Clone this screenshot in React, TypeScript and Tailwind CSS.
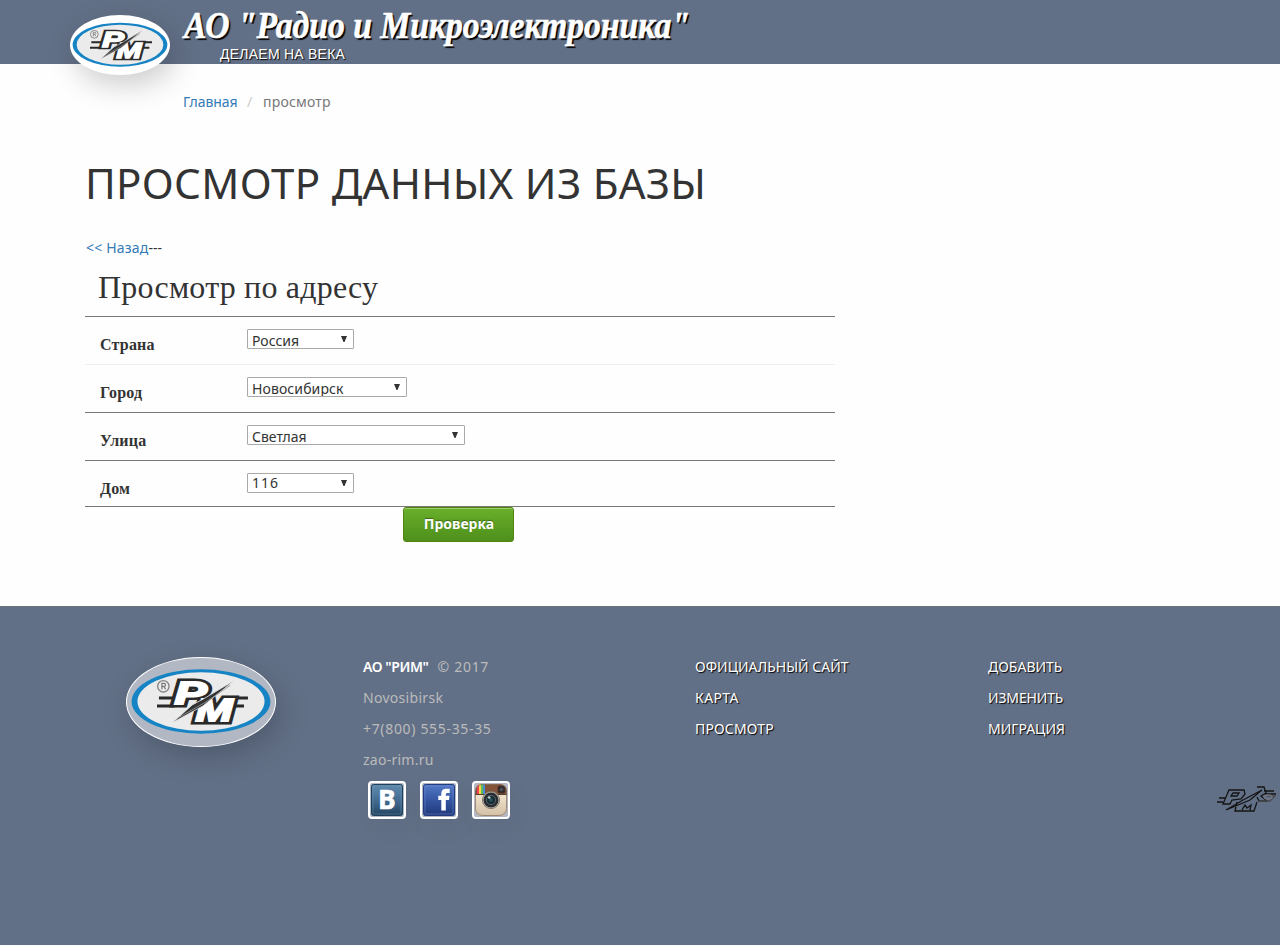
type Field = { label: string; value: string; width: string; line: string; text: string };

const fields: Field[] = [
  { label: "Страна", value: "Россия", width: "w-[107px]", line: "border-[#777]", text: "pt-[2px]" },
  { label: "Город", value: "Новосибирск", width: "w-[160px]", line: "border-[#eee]", text: "pt-[2px] tracking-[0.1px]" },
  { label: "Улица", value: "Светлая", width: "w-[218px]", line: "border-[#777]", text: "pt-[2px]" },
  { label: "Дом", value: "116", width: "w-[107px]", line: "border-[#777]", text: "tracking-[1px]" },
];

const shadow = "[text-shadow:1px_1px_1px_#000]";

function LogoLetters({ color, stroke }: { color: string; stroke: number }) {
  return (
    <g
      fontFamily="Liberation Sans"
      fontWeight="bold"
      fontStyle="italic"
      fontSize="32"
      fill={color}
      stroke={color}
      strokeWidth={stroke}
    >
      <text x="48" y="47.500" textLength="33" lengthAdjust="spacingAndGlyphs">P</text>
      <text x="69.500" y="64" textLength="38" lengthAdjust="spacingAndGlyphs">M</text>
    </g>
  );
}

function Logo({ className }: { className: string }) {
  return (
    <svg viewBox="0 0 150 90" className={className} aria-hidden="true">
      <ellipse cx="75" cy="44.5" rx="67.5" ry="31" fill="#ebebeb" />
      <path
        fillRule="evenodd"
        fill="#1684c4"
        d="M4 44.5A71 33 0 0 1 146 44.5A71 33 0 0 1 4 44.5ZM10 44.5A65 30 0 0 0 140 44.5A65 30 0 0 0 10 44.5Z"
      />
      <path d="M32 41H50M30 49H48M104 41H123M102 49H119" stroke="#292929" strokeWidth="3" />
      <LogoLetters color="#292929" stroke={7} />
      <LogoLetters color="#fff" stroke={2} />
      <path d="M109 23 87 41 77 49 46 66 66 48 79 41Z" fill="#333" stroke="#ebebeb" strokeWidth=".8" />
      <path d="M105 28 80 45 52 61" fill="none" stroke="#999" strokeWidth=".9" />
      <circle cx="36.5" cy="29" r="5.8" fill="none" stroke="#858585" strokeWidth="1.4" />
      <path d="M35 32v-6h2.2a1.5 1.5 0 0 1 0 3H35m2 0 1.8 3" fill="none" stroke="#777" strokeWidth="1.2" />
    </svg>
  );
}

function Header() {
  return (
    <header className="relative h-16 bg-[#627087] pl-[184px] text-white">
      <div className="absolute left-[70px] top-[15px] h-[60px] w-[100px] rounded-[50%] bg-white shadow-[5px_10px_30px_rgba(0,0,0,0.2)]">
        <Logo className="size-full" />
      </div>
      <div className="h-[46px] origin-left scale-x-[0.885] whitespace-nowrap pt-1 font-['Liberation_Serif',serif] text-[38px] font-bold italic leading-[42px] [-webkit-text-stroke:0.6px_#fff] [text-shadow:2px_2px_1px_#000]">
        АО "Радио и Микроэлектроника"
      </div>
      <div className={"pl-9 font-['Liberation_Sans',sans-serif] text-sm leading-4 tracking-[0.24px] " + shadow}>
        ДЕЛАЕМ НА ВЕКА
      </div>
    </header>
  );
}

function Main() {
  return (
    <main className="h-[542px] pl-[85px] text-sm text-[#333]">
      <nav className="flex h-[76px] pl-[98px] pt-[28px] leading-5 text-[#777]">
        <a className="w-[64px] tracking-[-0.1px] text-[#337ab7]">Главная</a>
        <span className="w-[16px] text-[#ccc]">/</span>
        <span className="tracking-[0.2px]">просмотр</span>
      </nav>
      <h1 className="h-[97px] pt-[19px] text-[42px] leading-[48px] tracking-[0.3px]">ПРОСМОТР ДАННЫХ ИЗ БАЗЫ</h1>
      <p className="h-[32px] pl-px pt-px leading-5">
        <a className="tracking-[0.2px] text-[#337ab7]">&lt;&lt; Назад</a>---
      </p>
      <h2 className="h-[47px] pl-[13px] font-['Liberation_Serif',serif] text-[32px] leading-[36px] tracking-[0.2px]">
        Просмотр по адресу
      </h2>
      <div className="flex w-[750px] flex-col border-b border-[#777]">
        {fields.map((f) => (
          <div key={f.label} className={"flex h-12 items-start border-t pl-[15px] last:h-[46px] " + f.line}>
            <span className="w-[147px] pt-[18px] font-['Liberation_Serif',serif] text-base font-bold leading-5 tracking-[0.2px]">
              {f.label}
            </span>
            <div className={"mt-3 flex h-5 justify-between overflow-hidden rounded-[1px] border border-[#a9a9a9] bg-white pl-1 pr-[5px] " + f.width}>
              <span className={"leading-[18px] " + f.text}>{f.value}</span>
              <svg viewBox="0 0 8 8" className="mt-[5px] size-2" aria-hidden="true">
                <path d="M1 1h6L4.5 7h-1z" fill="#333" />
              </svg>
            </div>
          </div>
        ))}
      </div>
      <button className="ml-[318px] block h-[35px] w-[111px] rounded-[3px] border border-[#538312] bg-linear-to-b from-[#6aaf2b] to-[#4e901b] pb-0.5 pl-px text-sm font-bold leading-[31px] text-white shadow-[inset_0_1px_0_#9bd168] [text-shadow:0_-1px_1px_#396715]">
        Проверка
      </button>
    </main>
  );
}

const tile = "size-[38px] rounded-[4px] border-2 border-white bg-[#b1b8c4] p-px shadow-[5px_10px_25px_rgba(0,0,0,0.04)]";

function Social() {
  return (
    <div className="flex gap-[14px] pl-[5px] pt-[6px]">
      <svg viewBox="0 0 32 32" className={tile} aria-label="VK">
        <defs>
          <linearGradient id="vk" x2="0" y2="1"><stop stopColor="#5f8bae" /><stop offset=".55" stopColor="#41698e" /><stop offset="1" stopColor="#23445f" /></linearGradient>
          <linearGradient id="fb" x2="0" y2="1"><stop stopColor="#5179c6" /><stop offset=".6" stopColor="#304f9b" /><stop offset="1" stopColor="#203878" /></linearGradient>
        </defs>
        <rect x=".5" y=".5" width="31" height="31" rx="2" fill="url(#vk)" stroke="#1d405d" />
        <rect x="2" y="2" width="28" height="28" rx="1" fill="none" stroke="#7b9ebb" strokeOpacity=".4" />
        <text x="7.2" y="24.5" fontFamily="Noto Sans" fontSize="26" fontWeight="bold" fill="#fff" stroke="#fff" strokeWidth=".7">B</text>
      </svg>
      <svg viewBox="0 0 32 32" className={tile} aria-label="Facebook">
        <rect x=".5" y=".5" width="31" height="31" rx="2" fill="url(#fb)" stroke="#203b80" />
        <rect x="2" y="2" width="28" height="28" rx="1" fill="none" stroke="#829de0" strokeOpacity=".4" />
        <path d="M18.3 26.5V16h-3v-4.2h3V10c0-4 2.2-5.2 5.4-5.2h3v4.2h-2.2c-1.2 0-1.7.5-1.7 1.6v1.2h3.7L26 16h-3.2v10.5z" fill="#fff" />
      </svg>
      <svg viewBox="0 0 32 32" className={tile} aria-label="Instagram">
        <defs>
          <linearGradient id="cream" x2="0" y2="1"><stop stopColor="#fff6df" /><stop offset="1" stopColor="#d3bfa6" /></linearGradient>
          <clipPath id="body"><rect x="0" y="0" width="32" height="32" rx="7" /></clipPath>
        </defs>
        <g clipPath="url(#body)">
          <rect width="32" height="32" fill="url(#cream)" />
          <rect width="32" height="10" fill="#835438" />
          <path d="M2 0h2v10H2z" fill="#ef4057" />
          <path d="M4 0h2v10H4z" fill="#ffd344" />
          <path d="M6 0h2v10H6z" fill="#58bf54" />
          <path d="M8 0h2v10H8z" fill="#4988d5" />
          <rect x="23" y="2" width="7" height="7" rx="1.5" fill="#282728" stroke="#4e3328" />
          <circle cx="26.5" cy="5.5" r="2" fill="#4b4c55" />
          <path d="M0 10.5h32" stroke="#563a2c" />
        </g>
        <circle cx="16" cy="16" r="8.5" fill="#d0c9bc" stroke="#7a7167" />
        <circle cx="16" cy="16" r="7.5" fill="#292d31" />
        <circle cx="16" cy="16" r="4.6" fill="#182a32" stroke="#56666c" />
        <circle cx="16" cy="16" r="2" fill="#275360" />
        <circle cx="14.2" cy="13.5" r="1.3" fill="#b9cdd1" />
        <rect x=".5" y=".5" width="31" height="31" rx="7" fill="none" stroke="#816d5b" strokeOpacity=".7" />
      </svg>
    </div>
  );
}

function Footer() {
  return (
    <footer className="flex h-[339px] border-t border-[#6d727a] bg-[#627087] pt-[44px] text-sm leading-[31px] text-[#bbb]">
      <div className="w-[363px] pl-[126px] pt-[6px]">
        <div className="h-[90px] w-[150px] rounded-[50%] border border-white bg-white/50 shadow-[5px_10px_30px_rgba(0,0,0,0.2)]">
          <Logo className="size-full" />
        </div>
      </div>
      <div className="w-[332px]">
        <p className="flex gap-[9px]">
          <b className="font-semibold tracking-[-0.4px] text-white">АО "РИМ"</b>
          <span className="tracking-[0.7px]">© 2017</span>
        </p>
        <p className="tracking-[0.3px]">Novosibirsk</p>
        <p className="tracking-[0.67px]">+7(800) 555-35-35</p>
        <p className="tracking-[0.25px]">zao-rim.ru</p>
        <Social />
      </div>
      <div className={"flex w-[293px] flex-col text-white " + shadow}>
        <a>ОФИЦИАЛЬНЫЙ САЙТ</a>
        <a className="tracking-[0.4px]">КАРТА</a>
        <a className="tracking-[0.15px]">ПРОСМОТР</a>
      </div>
      <div className={"flex flex-col text-white " + shadow}>
        <a>ДОБАВИТЬ</a>
        <a className="tracking-[-0.15px]">ИЗМЕНИТЬ</a>
        <a>МИГРАЦИЯ</a>
      </div>
    </footer>
  );
}

function CornerMark() {
  return (
    <svg viewBox="0 0 60 28" className="absolute left-[1217px] top-[785px] h-7 w-[60px]" aria-hidden="true">
      <g fill="none" stroke="#151515" strokeWidth="1.3">
        <path d="M12 5h15l1 4-4 5-9 1-2 4H6zM16 8h6l-2 3h-6zM2 13h6M0 17h6M9 25l17-10 19-10-12 10zM20 17l-2 9h19l3-9M25 25l3-5 2 3 4-3-1 5M40 2h7l2 6-5 3 6 5h-8l-2-4M47 6h10M48 9h11" />
        <path d="M42 16h11l5-5h-8" stroke="#474b52" />
        <ellipse cx="51" cy="12" rx="4" ry="2" stroke="#737780" />
      </g>
    </svg>
  );
}

export default function App() {
  return (
    <div className="relative h-[945px] w-[1280px] overflow-hidden bg-[#fefefe] font-['Noto_Sans',sans-serif]">
      <Header />
      <Main />
      <Footer />
      <CornerMark />
    </div>
  );
}
